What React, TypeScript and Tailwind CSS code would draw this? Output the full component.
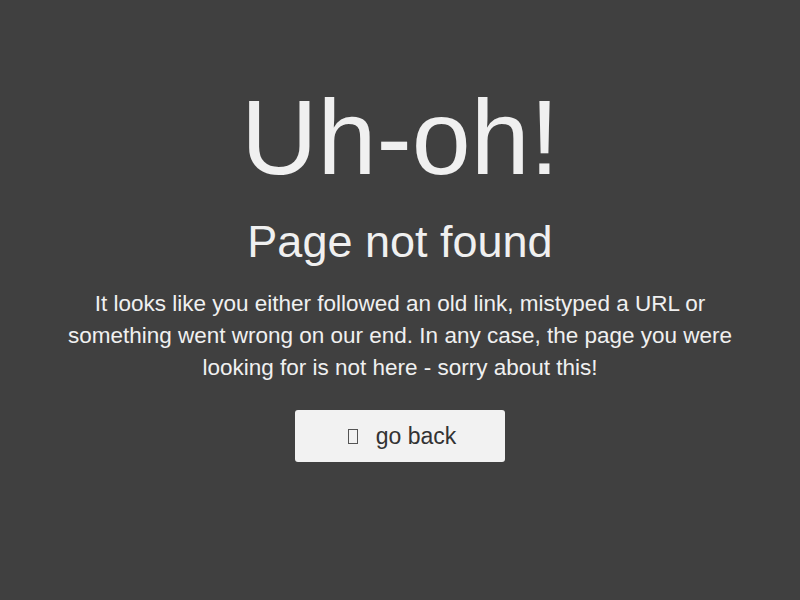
export default function App() {
	return (
		<div className="min-h-[600px] w-full bg-[#404040] font-['Liberation_Sans',Arial,sans-serif] text-[#f0f0f0] flex flex-col items-center">
			<h1 className="mt-[77px] text-[106px] leading-[120px]">Uh-oh!</h1>
			<h2 className="mt-[19px] text-[45px] leading-[52px]">Page not found</h2>
			<p className="mt-[20px] w-[700px] text-center text-[22.5px] leading-[32px]">
				It looks like you either followed an old link, mistyped a URL or something went wrong on our
				end. In any case, the page you were looking for is not here - sorry about this!
			</p>
			<button className="mt-[26px] w-[210px] h-[52px] rounded-[3px] bg-[#f2f2f2] text-[#333333] text-[23px] flex items-center justify-center gap-[18px] pl-[4px]">
				<span className="inline-block w-[10px] h-[15px] border border-[#555555]" />
				<span>go back</span>
			</button>
		</div>
	);
}
